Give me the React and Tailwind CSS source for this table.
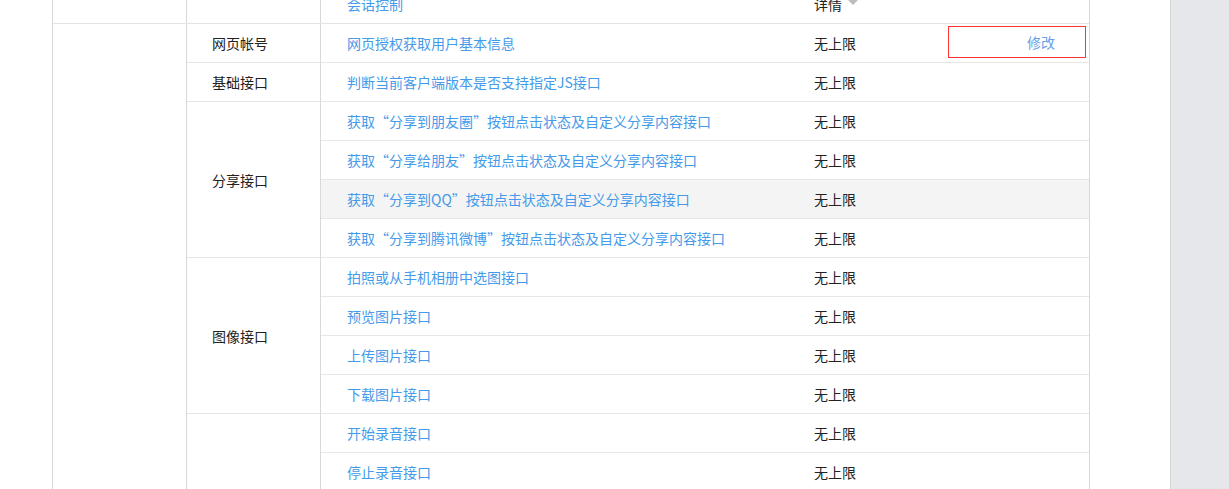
import React from "react";

const groups = [
  { label: "网页帐号", rows: ["网页授权获取用户基本信息"], edit: true },
  { label: "基础接口", rows: ["判断当前客户端版本是否支持指定JS接口"] },
  {
    label: "分享接口",
    rows: [
      "获取“分享到朋友圈”按钮点击状态及自定义分享内容接口",
      "获取“分享给朋友”按钮点击状态及自定义分享内容接口",
      "获取“分享到QQ”按钮点击状态及自定义分享内容接口",
      "获取“分享到腾讯微博”按钮点击状态及自定义分享内容接口",
    ],
    hover: 2,
  },
  {
    label: "图像接口",
    rows: ["拍照或从手机相册中选图接口", "预览图片接口", "上传图片接口", "下载图片接口"],
  },
  {
    label: "音频接口",
    rows: ["开始录音接口", "停止录音接口", "监听录音自动停止接口", "播放语音接口", "暂停播放接口", "停止播放接口"],
  },
];

function Row({ text, edit, hover }) {
  return (
    <div
      className={
        "flex h-[39px] items-center border-b border-[#e7e7e7] " +
        (hover ? "bg-[#f4f4f4]" : "bg-white")
      }
    >
      <div className="w-[467px] shrink-0 pl-[26px] text-[#459ae9]">{text}</div>
      <div className="flex h-full flex-1 items-center pl-[26px] pr-[3px]">
        <span className="text-[#222]">无上限</span>
        {edit ? (
          <div className="mb-[4px] ml-auto mt-[2px] flex h-[32px] w-[138px] items-center justify-end self-start border border-[#f33] pr-[30px] text-[#6aa0ea]">
            修改
          </div>
        ) : null}
      </div>
    </div>
  );
}

export default function App() {
  return (
    <div
      className="flex h-[489px] w-full overflow-hidden bg-[#e6e7eb] text-[14px] leading-[20px]"
      style={{ fontFamily: '"Noto Sans CJK SC", "Noto Sans", sans-serif' }}
    >
      <div className="h-full w-[1171px] shrink-0 border-r border-[#d5d5d5] bg-white pl-[52px]">
        <div className="mt-[-15px] w-[1038px] border-x border-[#d8d8d8]">
          <div className="flex h-[39px] border-b border-[#e4e4e4]">
            <div className="w-[134px] shrink-0 border-r border-[#d8d8d8]" />
            <div className="w-[134px] shrink-0 border-r border-[#d8d8d8]" />
            <div className="flex flex-1 items-center">
              <div className="w-[467px] shrink-0 pl-[26px] text-[#459ae9]">会话控制</div>
              <div className="flex items-center pl-[26px] text-[#222]">
                详情
                <svg width="10" height="6" viewBox="0 0 10 6" className="ml-[6px] mt-[-2px]">
                  <path d="M0 0 L10 0 L5 5 Z" fill="#bdbdbd" />
                </svg>
              </div>
            </div>
          </div>
          <div className="flex">
            <div className="w-[134px] shrink-0 border-r border-[#d8d8d8]" />
            <div className="flex-1">
              {groups.map((g) => (
                <div key={g.label} className="flex">
                  <div className="flex w-[134px] shrink-0 items-center border-b border-r border-[#e4e4e4] border-r-[#d8d8d8] pl-[25px] text-[#222]">
                    {g.label}
                  </div>
                  <div className="flex-1">
                    {g.rows.map((r, i) => (
                      <Row key={r} text={r} edit={g.edit && i === 0} hover={g.hover === i} />
                    ))}
                  </div>
                </div>
              ))}
            </div>
          </div>
        </div>
      </div>
      <div className="flex-1" />
    </div>
  );
}
